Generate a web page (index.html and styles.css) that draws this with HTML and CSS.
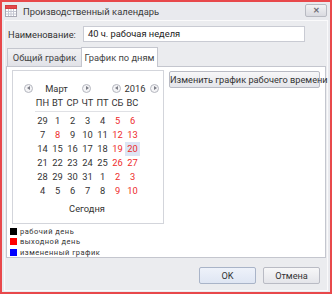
FILE: index.html
```html
<!DOCTYPE html>
<html lang="ru">
<head>
<meta charset="utf-8">
<link rel="stylesheet" href="styles.css">
</head>
<body>
<div class="window">
  <div class="titlebar">
    <svg class="appicon" width="12" height="12" viewBox="0 0 12 12">
      <rect x="0.5" y="0.5" width="11" height="11" fill="#fff" stroke="#a9a9b4"/>
      <rect x="0.5" y="0.5" width="11" height="3" fill="#e5484b" stroke="#d23c3f"/>
      <path d="M1 6.5H11M1 9H11M3.5 4V11M6 4V11M8.5 4V11" stroke="#c4c6d2" stroke-width="1"/>
    </svg>
    <span class="title">Производственный календарь</span>
    <button class="close" type="button"><span>✕</span></button>
  </div>
  <div class="client">
    <div class="namerow">
      <label class="label">Наименование:</label>
      <div class="input">40 ч. рабочая неделя</div>
    </div>
    <div class="tabs">
      <div class="tab">Общий график</div>
      <div class="tab active">График по дням</div>
    </div>
    <div class="panel">
      <div class="panel-top">
        <div class="calendar">
          <div class="nav">
            <span class="arrow left"></span>
            <span class="month">Март</span>
            <span class="arrow right"></span>
            <span class="arrow left ya"></span>
            <span class="year">2016</span>
            <span class="arrow right"></span>
          </div>
          <div class="grid head">
            <span>ПН</span><span>ВТ</span><span>СР</span><span>ЧТ</span><span>ПТ</span><span>СБ</span><span>ВС</span>
          </div>
          <div class="grid days">
            <span>29</span><span>1</span><span>2</span><span>3</span><span>4</span><span class="we">5</span><span class="we">6</span>
            <span>7</span><span class="we">8</span><span>9</span><span>10</span><span>11</span><span class="we">12</span><span class="we">13</span>
            <span>14</span><span>15</span><span>16</span><span>17</span><span>18</span><span class="we">19</span><span class="we today">20</span>
            <span>21</span><span>22</span><span>23</span><span>24</span><span>25</span><span class="we">26</span><span class="we">27</span>
            <span>28</span><span>29</span><span>30</span><span>31</span><span>1</span><span class="we">2</span><span class="we">3</span>
            <span>4</span><span>5</span><span>6</span><span>7</span><span>8</span><span class="we">9</span><span class="we">10</span>
          </div>
          <div class="todaylink">Сегодня</div>
        </div>
        <button class="btn change" type="button">Изменить график рабочего времени</button>
      </div>
      <ul class="legend">
        <li><span class="sw black"></span>рабочий день</li>
        <li><span class="sw red"></span>выходной день</li>
        <li><span class="sw blue"></span>измененный график</li>
      </ul>
    </div>
    <div class="footer">
      <button class="btn ok" type="button">OK</button>
      <button class="btn cancel" type="button">Отмена</button>
    </div>
  </div>
</div>
</body>
</html>
```

FILE: styles.css
```css
* { box-sizing: border-box; }
html, body { margin: 0; padding: 0; }
body {
  width: 332px;
  height: 294px;
  font-family: Roboto, "Liberation Sans", sans-serif;
  font-size: 9.3px;
  color: #333;
}
.window {
  width: 332px;
  height: 294px;
  border: 2px solid #e8484b;
  background: #e9eaee;
  display: flex;
  flex-direction: column;
}
.titlebar {
  height: 18px;
  display: flex;
  align-items: center;
  padding-left: 3px;
  padding-right: 3px;
}
.appicon { display: block; margin-top: -1px; }
.title {
  margin-left: 6px;
  font-size: 9.4px;
  color: #3a3a3a;
}
.close {
  margin-left: auto;
  width: 22px;
  height: 13px;
  padding: 0;
  border: 1px solid #b8bac2;
  border-radius: 2px;
  background: linear-gradient(#f2f2f4, #d9dae0);
  color: #6d6e76;
  font-size: 8px;
  line-height: 11px;
  font-weight: bold;
  display: flex;
  align-items: center;
  justify-content: center;
  margin-top: -2px;
}
.client {
  flex: 1;
  margin: 0 2px 1px 2px;
  border: 1px solid #fafafb;
  background: #ebecef;
  padding: 5px 1px 0 1px;
  display: flex;
  flex-direction: column;
}
.namerow {
  display: flex;
  align-items: center;
  height: 16px;
  padding-left: 2px;
}
.label { width: 75px; }
.input {
  width: 222px;
  height: 16px;
  background: #fff;
  border: 1px solid #c9cbd3;
  padding-left: 4px;
  line-height: 14px;
  color: #222;
}
.tabs {
  display: flex;
  align-items: flex-end;
  margin-top: 4px;
  padding-left: 1px;
  height: 20px;
}
.tab {
  height: 18px;
  width: 75px;
  border: 1px solid #c4c6ce;
  border-bottom: none;
  background: linear-gradient(#f1f1f3, #e1e2e7);
  line-height: 17px;
  color: #444;
  text-align: center;
  white-space: nowrap;
}
.tab.active {
  height: 20px;
  width: 77px;
  background: #fff;
  margin-left: -1px;
  margin-bottom: -1px;
  position: relative;
  z-index: 1;
  line-height: 19px;
}
.panel {
  width: 320px;
  height: 192px;
  background: #fff;
  border: 1px solid #c4c6ce;
  padding: 3px 5px 0 5px;
}
.panel-top {
  display: flex;
  align-items: flex-start;
}
.calendar {
  width: 154px;
  height: 154px;
  border: 1px solid #d3d5db;
  padding-top: 9px;
  display: flex;
  flex-direction: column;
}
.nav {
  height: 16px;
  display: flex;
  align-items: center;
  padding-left: 11px;
}
.arrow {
  width: 9px;
  height: 9px;
  border: 1px solid #b5b7bf;
  border-radius: 50%;
  background: #f4f4f6;
  position: relative;
}
.arrow::after {
  content: "";
  position: absolute;
  top: 1.5px;
  width: 0;
  height: 0;
  border-top: 2.5px solid transparent;
  border-bottom: 2.5px solid transparent;
}
.arrow.left::after { left: 2px; border-right: 3px solid #7c7e86; }
.arrow.right::after { left: 2.5px; border-left: 3px solid #7c7e86; }
.month { width: 37px; text-align: center; margin: 0 7px 0 5px; }
.arrow.ya { margin-left: 21px; }
.year { width: 22px; text-align: center; margin: 0 4px 0 3px; }
.grid {
  display: grid;
  grid-template-columns: repeat(7, 15px);
  margin-left: 22px;
  text-align: center;
}
.head {
  height: 16px;
  line-height: 14px;
  border-bottom: 1px solid #e0e1e5;
  width: 105px;
}
.days {
  grid-auto-rows: 14px;
  line-height: 14px;
  margin-top: 2px;
}
.we { color: #ee2b2b; }
.today { background: #dde5f4; }
.todaylink {
  text-align: center;
  margin-top: 4px;
  line-height: 14px;
  padding-right: 2px;
}
.btn {
  font-family: inherit;
  font-size: 9.2px;
  color: #333;
  border: 1px solid #b9bbc4;
  border-radius: 2px;
  background: linear-gradient(#f7f7f8, #e4e5ea);
  padding: 0;
}
.change {
  margin-left: 5px;
  margin-top: 1px;
  width: 151px;
  height: 17px;
  line-height: 15px;
  white-space: nowrap;
}
.legend {
  list-style: none;
  margin: 2px 0 0 -2px;
  padding: 0;
  font-size: 7.5px;
  letter-spacing: 0.5px;
  color: #333;
}
.legend li {
  display: flex;
  align-items: center;
  height: 10.5px;
}
.sw { width: 7px; height: 7px; margin-right: 3px; }
.sw.black { background: #000; }
.sw.red { background: #f00; }
.sw.blue { background: #00f; }
.footer {
  display: flex;
  justify-content: flex-end;
  gap: 7px;
  margin-top: 9px;
  padding-right: 6px;
}
.ok { width: 57px; height: 17px; background: linear-gradient(#eef2fa, #dfe6f3); border-color: #a9b4c8; }
.cancel { width: 57px; height: 17px; }
```
